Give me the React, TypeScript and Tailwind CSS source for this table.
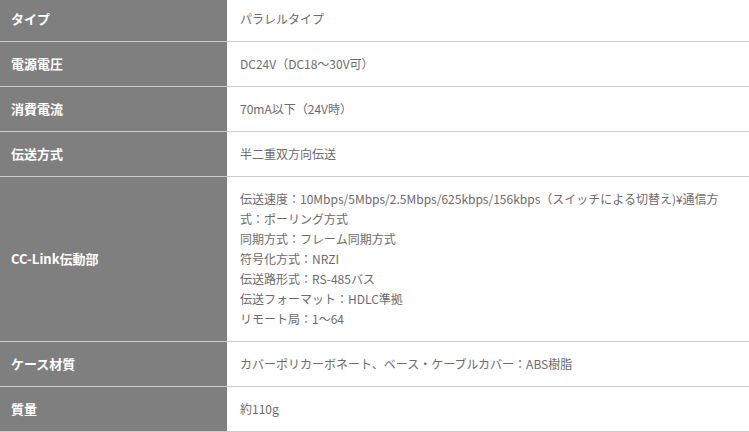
import { ReactNode } from "react"

interface SpecRowProps {
	label: string
	children: ReactNode
}

const SpecRow = ({ label, children }: SpecRowProps) => (
	<div className="flex border-b border-[#cccccc]">
		<div className="flex w-[227px] shrink-0 items-center bg-[#7f7f7f] px-[11px] text-[13px] font-bold text-white">
			{label}
		</div>
		<div className="flex-1 py-3 pl-[13px] pr-3 text-[12px] leading-5 text-[#6b6b6b]">
			{children}
		</div>
	</div>
)

const ccLink = [
	"伝送速度：10Mbps/5Mbps/2.5Mbps/625kbps/156kbps（スイッチによる切替え)¥通信方",
	"式：ポーリング方式",
	"同期方式：フレーム同期方式",
	"符号化方式：NRZI",
	"伝送路形式：RS-485バス",
	"伝送フォーマット：HDLC準拠",
	"リモート局：1〜64",
]

export default function App() {
	return (
		<div
			className="h-[432px] w-[749px] overflow-hidden bg-white"
			style={{ fontFamily: '"Noto Sans CJK JP", "Noto Sans", sans-serif' }}
		>
			<div className="-mt-[3px]">
				<SpecRow label="タイプ">パラレルタイプ</SpecRow>
				<SpecRow label="電源電圧">DC24V（DC18〜30V可）</SpecRow>
				<SpecRow label="消費電流">70mA以下（24V時）</SpecRow>
				<SpecRow label="伝送方式">半二重双方向伝送</SpecRow>
				<SpecRow label="CC-Link伝動部">
					{ccLink.map((line) => (
						<div key={line} className="whitespace-nowrap">
							{line}
						</div>
					))}
				</SpecRow>
				<SpecRow label="ケース材質">
					カバーポリカーボネート、ベース・ケーブルカバー：ABS樹脂
				</SpecRow>
				<SpecRow label="質量">約110g</SpecRow>
			</div>
		</div>
	)
}
